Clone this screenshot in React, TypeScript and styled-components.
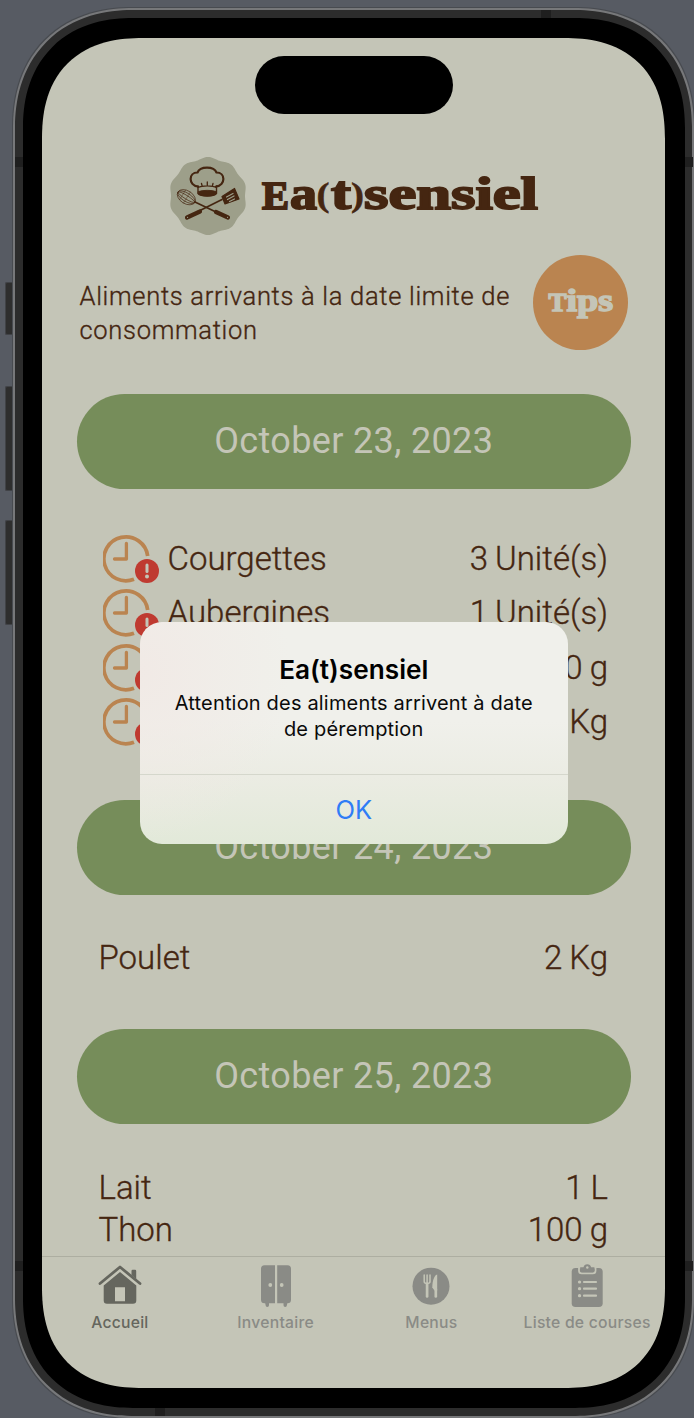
import React from "react";
import styled, { createGlobalStyle } from "styled-components";

const color = {
  desk: "#575b63",
  screen: "#c4c5b7",
  brown: "#452611",
  green: "#768d5a",
  orange: "#ba8450",
  red: "#bf3a30",
  badge: "#9d9f8a",
  tab: "#8a8b86",
  tabActive: "#65665e",
  blue: "#2f7cf6",
};

const bodyFont = `Roboto, "Liberation Sans", sans-serif`;
const systemFont = `Inter, "Liberation Sans", sans-serif`;
const displayFont = `"Liberation Serif", serif`;

const GlobalStyle = createGlobalStyle`
  * { box-sizing: border-box; }
  body { margin: 0; background: ${color.desk}; }
`;

const Desk = styled.div`
  position: relative;
  width: 694px;
  height: 1418px;
  padding: 8px 0 0 13px;
  overflow: hidden;
  background: ${color.desk};
`;

const Frame = styled.div`
  position: relative;
  width: 681px;
  height: 1410px;
  padding: 8px;
  border: 2px solid #77787a;
  border-radius: 120px;
  corner-shape: superellipse(1.15);
  background: #2c2c2c;
  box-shadow: 0 0 0 1px #484b50;
`;

const Bezel = styled.div`
  width: 662px;
  height: 1390px;
  padding: 20px 20px 20px 19px;
  border-radius: 110px;
  corner-shape: superellipse(1.17);
  background: #000;
`;

const Screen = styled.main`
  position: relative;
  display: flex;
  flex-direction: column;
  width: 623px;
  height: 1350px;
  border-radius: 101px;
  corner-shape: superellipse(1.25);
  overflow: hidden;
  background: ${color.screen};
  color: ${color.brown};
  font-family: ${bodyFont};
  font-weight: 300;
`;

const SideButton = styled.div<{ $top: number; $height: number }>`
  position: absolute;
  left: 5px;
  top: ${(p) => p.$top}px;
  width: 8px;
  height: ${(p) => p.$height}px;
  border: 1px solid #414347;
  border-right: 0;
  border-radius: 2px 0 0 2px;
  background: #2e2e2e;
`;

const Seam = styled.i<{ $x: number; $y: number; $vertical?: boolean }>`
  position: absolute;
  left: ${(p) => p.$x}px;
  top: ${(p) => p.$y}px;
  width: ${(p) => (p.$vertical ? 10 : 8)}px;
  height: ${(p) => (p.$vertical ? 8 : 10)}px;
  background: #1f1f1f;
`;

const Island = styled.div`
  flex: none;
  width: 198px;
  height: 58px;
  margin: 18px auto 0;
  border-radius: 29px;
  background: #000;
`;

const Brand = styled.header`
  display: flex;
  flex: none;
  align-items: center;
  gap: 14px;
  height: 78px;
  margin: 43px 0 0 127px;
  svg { display: block; overflow: visible; }
`;

const Intro = styled.section`
  display: flex;
  flex: none;
  justify-content: space-between;
  align-items: center;
  height: 96px;
  margin: 19px 37px 0 37.5px;
`;

const IntroText = styled.p`
  width: 445px;
  margin: 22px 0 0;
  font-size: 25.5px;
  line-height: 34px;
  letter-spacing: 0.7px;
  -webkit-text-stroke: 0.35px ${color.brown};
`;

const Tips = styled.button`
  display: grid;
  place-items: center;
  width: 95px;
  height: 95px;
  padding: 0;
  border: 0;
  border-radius: 50%;
  background: ${color.orange};
  svg { display: block; overflow: visible; }
`;

const Day = styled.section`
  flex: none;
  margin: 0 34px 50.4px;
`;

const Days = styled.div`
  flex: 1;
  min-height: 0;
  padding-top: 44.3px;
  overflow: hidden;
`;

const DatePill = styled.h2`
  height: 95px;
  margin: 0 0 42.3px 0.5px;
  border-radius: 48px;
  background: ${color.green};
  color: ${color.screen};
  font-size: 36px;
  font-weight: 400;
  line-height: 95px;
  letter-spacing: 0.35px;
  text-align: center;
`;

const FoodRow = styled.div<{ $alert?: boolean }>`
  display: flex;
  align-items: center;
  height: ${(p) => (p.$alert ? 54.4 : 42)}px;
  padding: 0 23px 0 ${(p) => (p.$alert ? 27 : 22.5)}px;
  font-size: 33px;
  line-height: 40px;
  -webkit-text-stroke: 0.35px ${color.brown};
  svg { flex: none; margin-right: 7.5px; }
`;

const Amount = styled.span`
  margin-left: auto;
  word-spacing: -1px;
`;

const TabBar = styled.nav`
  display: grid;
  grid-template-columns: repeat(4, 1fr);
  flex: none;
  height: 132px;
  border-top: 1px solid #adaea1;
`;

const Tab = styled.div<{ $active?: boolean }>`
  display: flex;
  flex-direction: column;
  align-items: center;
  padding-top: 6px;
  color: ${(p) => (p.$active ? color.tabActive : color.tab)};
  font: 500 15.7px/20px ${systemFont};
  letter-spacing: 0.25px;
  white-space: nowrap;
  svg { display: block; margin-bottom: 6px; }
`;

const Alert = styled.div`
  position: absolute;
  left: 98px;
  top: 584px;
  width: 427.5px;
  height: 222px;
  border-radius: 22px;
  overflow: hidden;
  background:
    radial-gradient(150px 170px at 0 50px, rgba(241, 233, 229, 0.9), rgba(241, 233, 229, 0)),
    linear-gradient(#f0f0eb 0 45%, #ebece3 70%, #e2e9d9);
  color: #0a0a0a;
  font-family: ${systemFont};
  font-weight: 400;
  text-align: center;
`;

const AlertBody = styled.div`
  height: 152.5px;
  padding-top: 32px;
  border-bottom: 1.5px solid #d5d7cc;
`;

const AlertTitle = styled.h1`
  margin: 0;
  color: #000;
  font-size: 26.2px;
  font-weight: 600;
  line-height: 32px;
`;

const AlertMessage = styled.p`
  margin: 5px 0 0;
  font-size: 20px;
  line-height: 25.5px;
  letter-spacing: 0.18px;
`;

const AlertAction = styled.button`
  width: 100%;
  height: 70px;
  border: 0;
  padding: 0;
  background: none;
  color: ${color.blue};
  font: 400 25.5px/70px ${systemFont};
`;

const scallop = (() => {
  const points: string[] = [];
  for (let i = 0; i < 180; i++) {
    const angle = (i * Math.PI) / 90;
    const r = 38 + 1 * Math.cos(angle * 10);
    points.push(`${(39 + r * Math.sin(angle)).toFixed(2)},${(39 - r * Math.cos(angle)).toFixed(2)}`);
  }
  return points.join(" ");
})();

const ChefBadge = () => (
  <svg width="78" height="78" viewBox="0 0 78 78" fill="none" stroke={color.brown} strokeLinecap="round" strokeLinejoin="round">
    <polygon points={scallop} fill={color.badge} stroke="none" />
    <path d="M29 29.500c-10-1.500-9.500-14-.5-14 2.500-6.500 16.500-6.500 19 0 9 0 9.500 12.500-.5 14" strokeWidth="2.200" />
    <path d="M29 29v7.500c3 3.300 15.500 3.300 18.500 0V29" strokeWidth="1.400" />
    <path d="M29 30.500c4-2.300 14.500-2.300 18.500 0M33 28.500l-.5-2M38.300 28v-3M43.500 28.500l.5-2" strokeWidth="1.300" />
    <path d="M29.500 34.500c4-1.600 13.500-1.600 17.500 0v2.500c-3 2.800-14.500 2.800-17.500 0z" fill={color.brown} strokeWidth=".8" />
    <g transform="rotate(32 17 40)" strokeWidth=".65">
      <ellipse cx="17.500" cy="40" rx="10" ry="6.500" />
      <ellipse cx="17.500" cy="40" rx="10" ry="4.200" />
      <ellipse cx="17.500" cy="40" rx="10" ry="1.800" />
      <path d="M13 34.500v11M18 33.500v13" strokeWidth=".4" />
    </g>
    <path d="M26 45l22 10.500" strokeWidth="1.700" />
    <path d="M47 55l12 5.500" strokeWidth="4.200" />
    <path d="M53 42.500L29 54.500" strokeWidth="1.600" />
    <path d="M31 54.500l-13 6" strokeWidth="4.200" />
    <path d="M53 39.500l12.500-8 4.500 10.500-14 5z" fill={color.brown} strokeWidth="1.200" />
    <path d="M57.500 40l6.500-3.500M58.500 42.500l6.500-3.500M60.500 44.500l5-2.500" stroke={color.badge} strokeWidth="1.200" />
    <path d="M18.500 60.300h.1M58.500 60.300h.1" stroke={color.badge} strokeWidth="1.200" />
  </svg>
);

const Wordmark = () => (
  <svg width="278" height="50" viewBox="0 0 278 50" fontFamily={displayFont} fontWeight="700" fill={color.brown} stroke={color.brown} strokeWidth="1.900">
    <text x="1" y="38" textLength="27" lengthAdjust="spacingAndGlyphs" fontSize="40">E</text>
    <text x="29" y="38" textLength="27" lengthAdjust="spacingAndGlyphs" fontSize="47">a</text>
    <text x="55.500" y="35" textLength="13" lengthAdjust="spacingAndGlyphs" fontSize="34" strokeWidth=".5">(</text>
    <text x="70" y="38" textLength="20" lengthAdjust="spacingAndGlyphs" fontSize="47">t</text>
    <text x="90" y="35" textLength="13" lengthAdjust="spacingAndGlyphs" fontSize="34" strokeWidth=".5">)</text>
    <text x="103" y="38" textLength="174" lengthAdjust="spacingAndGlyphs" fontSize="47">sensiel</text>
  </svg>
);

const LateClock = () => (
  <svg width="57" height="50" viewBox="0 0 57 50" fill="none" stroke={color.orange} strokeWidth="3.700" strokeLinecap="round">
    <path d="M44.700 22A22 22 0 1 0 31 45.300" strokeLinecap="butt" />
    <path d="M23.400 9.500v15.500H11.500" strokeWidth="3.300" strokeLinejoin="round" />
    <circle cx="44" cy="37" r="12" fill={color.red} stroke="none" />
    <path d="M44 31v6.500" stroke={color.screen} strokeWidth="3" />
    <circle cx="44" cy="42.500" r="2" fill={color.screen} stroke="none" />
  </svg>
);

const HomeIcon = () => (
  <svg width="44" height="44" viewBox="0 0 44 44" fill="currentColor">
    <path d="M2 20.500L22 4l20 16.500" fill="none" stroke="currentColor" strokeWidth="2.800" strokeLinecap="round" strokeLinejoin="round" />
    <path d="M33.500 12V8a1.200 1.200 0 0 1 1.200-1.200h2.200A1.200 1.200 0 0 1 38.200 8v8z" />
    <path fillRule="evenodd" d="M22 9l16.300 13.500v15a3.300 3.300 0 0 1-3.300 3.300H9a3.300 3.300 0 0 1-3.300-3.300v-15zM17 24.300v14h10v-14z" />
  </svg>
);

const CabinetIcon = () => (
  <svg width="44" height="44" viewBox="0 0 44 44" fill="currentColor">
    <path d="M10.500 2.200h10.500v38h-10.500a3.500 3.500 0 0 1-3.500-3.500v-31a3.500 3.500 0 0 1 3.500-3.500zM23.200 2.200h10.300a3.500 3.500 0 0 1 3.500 3.500v31a3.500 3.500 0 0 1-3.500 3.500h-10.300z" />
    <path d="M11 39h4v3.200a1.700 1.700 0 0 1-3.400 0zM29.500 39h4l-.600 3.200a1.700 1.700 0 0 1-3.400 0z" />
    <circle cx="16.300" cy="22" r="1.900" fill={color.screen} />
    <circle cx="27.700" cy="22" r="1.900" fill={color.screen} />
  </svg>
);

const MenuIcon = () => (
  <svg width="44" height="44" viewBox="0 0 44 44">
    <circle cx="22" cy="23.200" r="18.500" fill="currentColor" />
    <g fill="none" stroke={color.screen} strokeLinecap="round">
      <path d="M15.200 12v6.500c0 2.700 5.800 2.700 5.800 0V12M18.100 12v9" strokeWidth="1.500" />
      <path d="M18.100 21v12.500" strokeWidth="2.700" />
      <path d="M26.800 26v7.500" strokeWidth="2.700" />
    </g>
    <path d="M28.200 11.500v16h-2.700l-2.200-3c0-6 1.600-12 4.900-13z" fill={color.screen} />
  </svg>
);

const ListIcon = () => (
  <svg width="44" height="44" viewBox="0 0 44 44">
    <rect x="6.700" y="5" width="31" height="39" rx="3.800" fill="currentColor" />
    <path d="M14 4.500v3.300a2.600 2.600 0 0 0 2.600 2.600h11.300a2.600 2.600 0 0 0 2.600-2.600V4.500z" fill="currentColor" stroke={color.screen} strokeWidth="1.800" />
    <path d="M13.200 3.300h18v1.800h-18z" fill={color.screen} />
    <path d="M15.200 4.300h3.300a3.900 3.900 0 0 1 7.600 0h3.300v3.200a1.800 1.800 0 0 1-1.800 1.800H17a1.800 1.800 0 0 1-1.800-1.800z" fill="currentColor" />
    <circle cx="22.300" cy="4.500" r="1.200" fill={color.screen} />
    <path d="M19 19h12M19 25.700h12M19 32.700h12" stroke={color.screen} strokeWidth="2.200" strokeLinecap="round" />
    <path d="M14.500 19h.1M14.500 25.700h.1M14.500 32.700h.1" stroke={color.screen} strokeWidth="3.200" strokeLinecap="round" />
  </svg>
);

type Food = { name?: string; amount: string; alert?: boolean };

const days: { date: string; foods: Food[] }[] = [
  {
    date: "October 23, 2023",
    foods: [
      { name: "Courgettes", amount: "3 Unité(s)", alert: true },
      { name: "Aubergines", amount: "1 Unité(s)", alert: true },
      { amount: "0 g", alert: true },
      { amount: "Kg", alert: true },
    ],
  },
  { date: "October 24, 2023", foods: [{ name: "Poulet", amount: "2 Kg" }] },
  {
    date: "October 25, 2023",
    foods: [
      { name: "Lait", amount: "1 L" },
      { name: "Thon", amount: "100 g" },
    ],
  },
];

const tabs = [
  { label: "Accueil", Icon: HomeIcon },
  { label: "Inventaire", Icon: CabinetIcon },
  { label: "Menus", Icon: MenuIcon },
  { label: "Liste de courses", Icon: ListIcon },
];

export default function App() {
  return (
    <>
      <GlobalStyle />
      <Desk>
        <SideButton $top={282} $height={53} />
        <SideButton $top={386} $height={105} />
        <SideButton $top={520} $height={105} />
        <Frame>
          <Seam $x={0} $y={147} />
          <Seam $x={670} $y={147} />
          <Seam $x={0} $y={1251} />
          <Seam $x={670} $y={1251} />
          <Seam $x={526} $y={0} $vertical />
          <Seam $x={140} $y={1398} $vertical />
          <Bezel>
            <Screen>
              <Island />
              <Brand>
                <ChefBadge />
                <Wordmark />
              </Brand>
              <Intro>
                <IntroText>
                  Aliments arrivants à la date limite de
                  <br />
                  consommation
                </IntroText>
                <Tips>
                  <svg width="66" height="34" viewBox="0 0 66 34" fontFamily={displayFont} fontWeight="700" fill={color.screen} stroke={color.screen} strokeWidth="1.500">
                    <text x="0.500" y="25.500" textLength="18" lengthAdjust="spacingAndGlyphs" fontSize="26">T</text>
                    <text x="18.500" y="25.500" textLength="46.500" lengthAdjust="spacingAndGlyphs" fontSize="31">ips</text>
                  </svg>
                </Tips>
              </Intro>
              <Days>
                {days.map((day) => (
                  <Day key={day.date}>
                    <DatePill>{day.date}</DatePill>
                    {day.foods.map((food) => (
                      <FoodRow key={food.amount} $alert={food.alert}>
                        {food.alert && <LateClock />}
                        {food.name && <span>{food.name}</span>}
                        <Amount>{food.amount}</Amount>
                      </FoodRow>
                    ))}
                  </Day>
                ))}
              </Days>
              <TabBar>
                {tabs.map(({ label, Icon }, index) => (
                  <Tab key={label} $active={index === 0}>
                    <Icon />
                    {label}
                  </Tab>
                ))}
              </TabBar>
              <Alert role="alertdialog">
                <AlertBody>
                  <AlertTitle>Ea(t)sensiel</AlertTitle>
                  <AlertMessage>
                    Attention des aliments arrivent à date
                    <br />
                    de péremption
                  </AlertMessage>
                </AlertBody>
                <AlertAction>OK</AlertAction>
              </Alert>
            </Screen>
          </Bezel>
        </Frame>
      </Desk>
    </>
  );
}
